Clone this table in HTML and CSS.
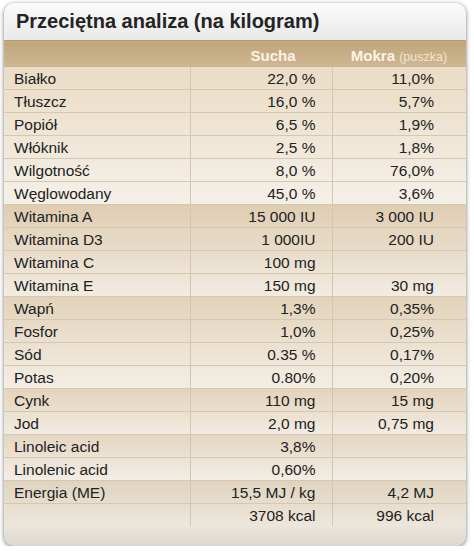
FILE: index.html
```html
<!DOCTYPE html>
<html lang="pl">
<head>
<meta charset="utf-8">
<link rel="stylesheet" href="styles.css">
</head>
<body>
<div class="card">
  <h1 class="title">Przeciętna analiza (na kilogram)</h1>
  <table class="grid">
    <colgroup><col class="c1"><col class="c2"><col class="c3"></colgroup>
    <thead>
      <tr class="head"><th></th><th class="h-sucha">Sucha</th><th class="h-mokra">Mokra <span class="sub">(puszka)</span></th></tr>
    </thead>
    <tbody class="g g1">
      <tr><td>Białko</td><td>22,0 %</td><td>11,0%</td></tr>
      <tr><td>Tłuszcz</td><td>16,0 %</td><td>5,7%</td></tr>
      <tr><td>Popiół</td><td>6,5 %</td><td>1,9%</td></tr>
      <tr><td>Włóknik</td><td>2,5 %</td><td>1,8%</td></tr>
      <tr><td>Wilgotność</td><td>8,0 %</td><td>76,0%</td></tr>
      <tr><td>Węglowodany</td><td>45,0 %</td><td>3,6%</td></tr>
    </tbody>
    <tbody class="g g2">
      <tr><td>Witamina A</td><td>15 000 IU</td><td>3 000 IU</td></tr>
      <tr><td>Witamina D3</td><td>1 000IU</td><td>200 IU</td></tr>
      <tr><td>Witamina C</td><td>100 mg</td><td></td></tr>
      <tr><td>Witamina E</td><td>150 mg</td><td>30 mg</td></tr>
    </tbody>
    <tbody class="g g3">
      <tr><td>Wapń</td><td>1,3%</td><td>0,35%</td></tr>
      <tr><td>Fosfor</td><td>1,0%</td><td>0,25%</td></tr>
      <tr><td>Sód</td><td>0.35 %</td><td>0,17%</td></tr>
      <tr><td>Potas</td><td>0.80%</td><td>0,20%</td></tr>
    </tbody>
    <tbody class="g g4">
      <tr><td>Cynk</td><td>110 mg</td><td>15 mg</td></tr>
      <tr><td>Jod</td><td>2,0 mg</td><td>0,75 mg</td></tr>
    </tbody>
    <tbody class="g g5">
      <tr><td>Linoleic acid</td><td>3,8%</td><td></td></tr>
      <tr><td>Linolenic acid</td><td>0,60%</td><td></td></tr>
    </tbody>
    <tbody class="g g6">
      <tr><td>Energia (ME)</td><td>15,5 MJ / kg</td><td>4,2 MJ</td></tr>
      <tr class="last"><td></td><td>3708 kcal</td><td>996 kcal</td></tr>
    </tbody>
  </table>
  <div class="foot"></div>
</div>
</body>
</html>
```

FILE: styles.css
```css
html, body {
  margin: 0;
  padding: 0;
  background: #ffffff;
}
body {
  font-family: "Liberation Sans", Arial, sans-serif;
  color: #222;
}
.card {
  margin: 3px 0 0 4px;
  width: 462px;
  border-radius: 10px;
  overflow: hidden;
  box-shadow: 0 1px 4px rgba(0, 0, 0, 0.55), inset 0 0 0 1px rgba(160,150,135,0.35);
  background: #ece6da;
}
.title {
  margin: 0;
  height: 37px;
  line-height: 37px;
  padding-left: 12px;
  font-size: 20px;
  font-weight: bold;
  color: #242424;
  background: linear-gradient(#fbfbfb, #e9e9e9);
}
.grid {
  width: 462px;
  border-collapse: collapse;
  table-layout: fixed;
  font-size: 15.5px;
}
.c1 { width: 186px; }
.c2 { width: 142px; }
.c3 { width: 134px; }
.head th {
  height: 26px;
  padding: 3px 0 0 0;
  box-sizing: border-box;
  background: linear-gradient(#c2a67c, #cdb692);
  color: #fbf4e6;
  font-size: 15px;
  font-weight: bold;
  text-align: center;
  border-top: 1px solid #b39a74;
}
.head .h-sucha { padding-left: 24px; }
.head .sub {
  font-weight: normal;
  font-size: 12.5px;
  color: #f1e5d1;
}
.grid td {
  height: 21px;
  padding: 1px 0 0 0;
  border-bottom: 1px solid #d6c8b0;
  line-height: 21px;
  vertical-align: middle;
  white-space: nowrap;
}
.grid td:nth-child(1) { padding-left: 10px; }
.grid td:nth-child(2) {
  text-align: right;
  padding-right: 16px;
  border-left: 1px solid #d4c6ae;
}
.grid td:nth-child(3) {
  text-align: right;
  padding-right: 32px;
  border-left: 1px solid #d4c6ae;
}
.g tr:first-child td { border-top: 1px solid #c9b596; }
.g1 { background: linear-gradient(#eadcc5, #f5f0e8); }
.g2 { background: linear-gradient(#dfcdb1, #f2ece2); }
.g3 { background: linear-gradient(#e3d3ba, #f3eee5); }
.g4 { background: linear-gradient(#e3d4bc, #f2ece2); }
.g5 { background: linear-gradient(#e4d7c2, #f3eee6); }
.g6 { background: linear-gradient(#e0d4c0, #ede7dc); }
.grid tr.last td { border-bottom: 0; }
.foot {
  height: 20px;
  background: linear-gradient(#ebe6dc, #dcd8d0);
}
```
